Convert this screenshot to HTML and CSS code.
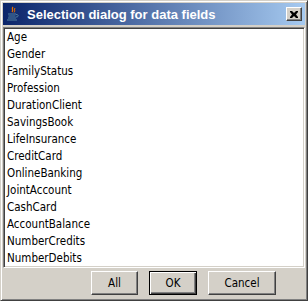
FILE: index.html
```html
<!DOCTYPE html>
<html>
<head>
<meta charset="utf-8">
<link rel="stylesheet" href="styles.css">
</head>
<body>
<div class="window">
  <div class="titlebar">
    <svg class="appicon" width="16" height="16" viewBox="0 0 16 16">
      <path d="M8 1 C6 3 9 4 7 6" stroke="#e76f00" stroke-width="1.3" fill="none"/>
      <path d="M10 2 C8.5 3.5 11 4.5 9 6.5" stroke="#e76f00" stroke-width="1" fill="none"/>
      <path d="M3 8 H11 M3.5 10 H10.5 M3 12 H11" stroke="#5382a1" stroke-width="1.1" fill="none"/>
      <path d="M11 8.5 C14 8.5 14 11 11 11" stroke="#5382a1" stroke-width="1" fill="none"/>
      <path d="M2 14 H12" stroke="#5382a1" stroke-width="1" fill="none"/>
    </svg>
    <span class="title">Selection dialog for data fields</span>
    <span class="closebtn">
      <svg width="8" height="7" viewBox="0 0 8 7"><path d="M0 0h2l2 2 2-2h2v1l-2 2.5 2 2.5v1h-2l-2-2-2 2h-2v-1l2-2.5-2-2.5z" fill="#000"/></svg>
    </span>
  </div>
  <div class="list">
    <div class="item">Age</div>
    <div class="item">Gender</div>
    <div class="item">FamilyStatus</div>
    <div class="item">Profession</div>
    <div class="item">DurationClient</div>
    <div class="item">SavingsBook</div>
    <div class="item">LifeInsurance</div>
    <div class="item">CreditCard</div>
    <div class="item">OnlineBanking</div>
    <div class="item">JointAccount</div>
    <div class="item">CashCard</div>
    <div class="item">AccountBalance</div>
    <div class="item">NumberCredits</div>
    <div class="item">NumberDebits</div>
  </div>
  <div class="buttons">
    <button class="btn btn-all">All</button>
    <button class="btn btn-ok">OK</button>
    <button class="btn btn-cancel">Cancel</button>
  </div>
</div>
</body>
</html>
```
FILE: styles.css
```css
html, body {
  margin: 0;
  padding: 0;
  background: #d4d0c8;
}
.window {
  box-sizing: border-box;
  width: 308px;
  height: 301px;
  background: #d4d0c8;
  border-top: 1px solid #d4d0c8;
  border-left: 1px solid #d4d0c8;
  border-right: 1px solid #404040;
  border-bottom: 1px solid #404040;
  box-shadow: inset 1px 1px 0 #ffffff, inset -1px -1px 0 #808080;
  padding: 2px;
  display: flex;
  flex-direction: column;
  font-family: "DejaVu Sans Condensed", "Liberation Sans", sans-serif;
}
.titlebar {
  height: 22px;
  background: linear-gradient(to right, #0a246a, #a6caf0);
  display: flex;
  align-items: center;
  padding: 0 2px 0 2px;
  flex: none;
}
.appicon {
  flex: none;
  margin-right: 6px;
}
.title {
  color: #fff;
  font-family: "Liberation Sans", sans-serif;
  font-weight: bold;
  font-size: 13px;
  flex: 1;
  white-space: nowrap;
}
.closebtn {
  box-sizing: border-box;
  width: 16px;
  height: 14px;
  background: #d4d0c8;
  border-top: 1px solid #fff;
  border-left: 1px solid #fff;
  border-right: 1px solid #404040;
  border-bottom: 1px solid #404040;
  box-shadow: inset -1px -1px 0 #808080;
  display: flex;
  align-items: center;
  justify-content: center;
  margin-right: 1px;
}
.list {
  margin-top: 2px;
  height: 241px;
  flex: none;
  background: #fff;
  border-top: 1px solid #808080;
  border-left: 1px solid #808080;
  border-right: 1px solid #fff;
  border-bottom: 1px solid #fff;
  box-shadow: inset 1px 1px 0 #404040, inset -1px -1px 0 #d4d0c8;
  padding: 1px 2px 0 3px;
  box-sizing: border-box;
}
.item {
  height: 17px;
  line-height: 17px;
  font-size: 11.5px;
  color: #000;
  white-space: nowrap;
}
.buttons {
  flex: 1;
  display: flex;
  justify-content: flex-end;
  align-items: center;
  gap: 11px;
  padding-right: 29px;
}
.btn {
  box-sizing: border-box;
  height: 24px;
  font-family: "DejaVu Sans Condensed", "Liberation Sans", sans-serif;
  font-size: 11.5px;
  color: #000;
  background: #d4d0c8;
  border-top: 1px solid #fff;
  border-left: 1px solid #fff;
  border-right: 1px solid #404040;
  border-bottom: 1px solid #404040;
  box-shadow: inset -1px -1px 0 #808080;
  padding: 0;
  margin: 0;
}
.btn-all { width: 47px; }
.btn-ok {
  width: 48px;
  border: 1px solid #000;
  box-shadow: inset 1px 1px 0 #fff, inset -1px -1px 0 #404040, inset -2px -2px 0 #808080;
}
.btn-cancel { width: 68px; }
```
